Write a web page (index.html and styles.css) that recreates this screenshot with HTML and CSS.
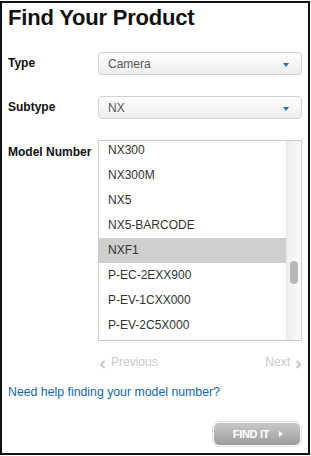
FILE: index.html
```html
<!DOCTYPE html>
<html lang="en">
<head>
    <meta charset="UTF-8">
    <meta name="viewport" content="width=device-width, initial-scale=1.0">
    <title>Find Your Product</title>
    <link rel="stylesheet" href="styles.css">
</head>
<body>
    <div class="finder">
        <h1 class="finder-title">Find Your Product</h1>

        <div class="field">
            <label class="field-label">Type</label>
            <div class="select">
                <span>Camera</span>
                <span class="select-arrow"></span>
            </div>
        </div>

        <div class="field">
            <label class="field-label">Subtype</label>
            <div class="select">
                <span>NX</span>
                <span class="select-arrow"></span>
            </div>
        </div>

        <div class="field field-top">
            <label class="field-label model-label">Model Number</label>
            <div class="model-list">
                <ul class="model-items">
                    <li>NX300</li>
                    <li>NX300M</li>
                    <li>NX5</li>
                    <li>NX5-BARCODE</li>
                    <li class="selected">NXF1</li>
                    <li>P-EC-2EXX900</li>
                    <li>P-EV-1CXX000</li>
                    <li>P-EV-2C5X000</li>
                </ul>
                <div class="scroll-track">
                    <div class="scroll-thumb"></div>
                </div>
            </div>
        </div>

        <div class="pager">
            <a href="#" class="pager-link">
                <svg class="chev" width="7" height="9" viewBox="0 0 7 9"><polyline points="5.5,1 1.8,4.5 5.5,8" fill="none" stroke="#c8c8c8" stroke-width="2"/></svg>
                Previous
            </a>
            <a href="#" class="pager-link">
                Next
                <svg class="chev" width="7" height="9" viewBox="0 0 7 9"><polyline points="1.5,1 5.2,4.5 1.5,8" fill="none" stroke="#c8c8c8" stroke-width="2"/></svg>
            </a>
        </div>

        <a href="#" class="help-link">Need help finding your model number?</a>

        <div class="actions">
            <div class="btn-ring">
                <button class="btn-find">FIND IT <span class="btn-arrow"></span></button>
            </div>
        </div>
    </div>
</body>
</html>
```

FILE: styles.css
```css
body {
    margin: 0;
    padding-top: 1px;
    font-family: 'Liberation Sans', Arial, sans-serif;
    background-color: #fff;
    color: #333;
}
.finder {
    width: 310px;
    height: 454px;
    box-sizing: border-box;
    border: 2px solid #111;
    padding: 2px 6px 0 6px;
}
.finder-title {
    margin: 0;
    font-size: 22px;
    line-height: 26px;
    font-weight: bold;
    color: #111;
    letter-spacing: -0.2px;
}
.field {
    display: flex;
    align-items: center;
    margin-top: 21px;
}
.field-top {
    align-items: flex-start;
}
.field-label {
    width: 90px;
    flex-shrink: 0;
    font-size: 12px;
    line-height: 15px;
    font-weight: bold;
    color: #111;
}
.model-label {
    padding-top: 5px;
}
.select {
    flex: 1;
    height: 23px;
    box-sizing: border-box;
    display: flex;
    align-items: center;
    justify-content: space-between;
    padding: 0 12px 0 9px;
    border: 1px solid #d2d2d2;
    border-radius: 4px;
    background: linear-gradient(#ffffff, #ededed);
    font-size: 12px;
    color: #555;
}
.select-arrow {
    width: 0;
    height: 0;
    border-left: 3px solid transparent;
    border-right: 3px solid transparent;
    border-top: 4px solid #1a72c4;
    margin-top: 2px;
}
.model-list {
    flex: 1;
    height: 201px;
    box-sizing: border-box;
    display: flex;
    border: 1px solid #cdcdcd;
    background: #fff;
    overflow: hidden;
}
.model-items {
    flex: 1;
    list-style: none;
    margin: -3px 0 0 0;
    padding: 0;
}
.model-items li {
    height: 25px;
    line-height: 25px;
    padding-left: 9px;
    font-size: 12px;
    color: #333;
}
.model-items li.selected {
    background: #cfcfcf;
}
.scroll-track {
    width: 15px;
    flex-shrink: 0;
    box-sizing: border-box;
    border-left: 1px solid #e6e6e6;
    background: linear-gradient(to right, #efefef, #fafafa);
    padding: 120px 0 0 3px;
}
.scroll-thumb {
    width: 8px;
    height: 23px;
    border-radius: 4px;
    background: #b8b8b8;
}
.pager {
    display: flex;
    justify-content: space-between;
    margin: 13px 0 0 91px;
}
.pager-link {
    display: flex;
    align-items: center;
    gap: 5px;
    font-size: 12px;
    line-height: 16px;
    color: #c8c8c8;
    text-decoration: none;
}
.chev {
    margin-top: 4px;
}
.help-link {
    display: block;
    margin-top: 14px;
    font-size: 12.3px;
    line-height: 16px;
    color: #1268b0;
    text-decoration: none;
}
.actions {
    display: flex;
    justify-content: flex-end;
    margin-top: 21px;
}
.btn-ring {
    padding: 1px;
    border: 1px solid #e4e4e4;
    border-radius: 7px;
    background: #fafafa;
}
.btn-find {
    display: flex;
    align-items: center;
    justify-content: center;
    gap: 10px;
    width: 86px;
    height: 22px;
    padding: 0 0 0 2px;
    border: none;
    border-radius: 5px;
    background: linear-gradient(#c9c9c9, #9c9c9c);
    color: #fff;
    font-family: 'Liberation Sans', Arial, sans-serif;
    font-size: 11px;
    font-weight: bold;
    letter-spacing: -0.3px;
    cursor: pointer;
}
.btn-arrow {
    width: 0;
    height: 0;
    border-top: 3px solid transparent;
    border-bottom: 3px solid transparent;
    border-left: 4px solid #fff;
}
```
